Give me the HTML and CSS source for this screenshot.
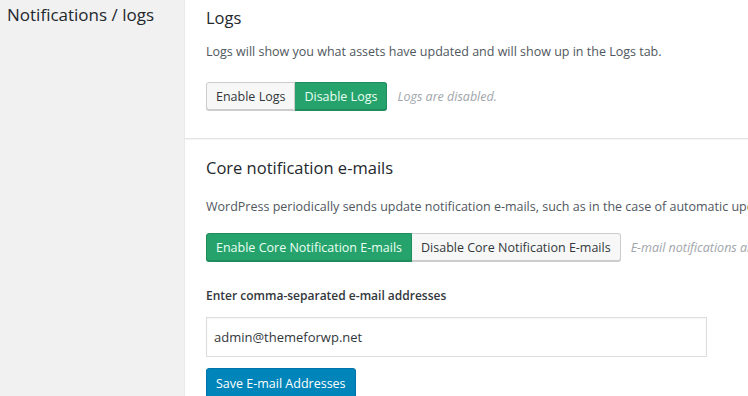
FILE: index.html
```html
<!DOCTYPE html>
<html lang="en">
<head>
    <meta charset="UTF-8">
    <title>Notifications / logs</title>
    <link rel="stylesheet" href="styles.css">
</head>
<body>
    <div class="sidebar">
        <h1 class="sidebar-title">Notifications / logs</h1>
    </div>

    <div class="main">
        <div class="section section-logs">
            <h2>Logs</h2>
            <p class="desc">Logs will show you what assets have updated and will show up in the Logs tab.</p>
            <div class="controls">
                <div class="btn-group">
                    <button class="btn">Enable Logs</button>
                    <button class="btn btn-on">Disable Logs</button>
                </div>
                <span class="status">Logs are disabled.</span>
            </div>
        </div>

        <div class="section section-core">
            <h2>Core notification e-mails</h2>
            <p class="desc">WordPress periodically sends update notification e-mails, such as in the case of automatic updates being applied.</p>
            <div class="controls">
                <div class="btn-group">
                    <button class="btn btn-on">Enable Core Notification E-mails</button>
                    <button class="btn">Disable Core Notification E-mails</button>
                </div>
                <span class="status">E-mail notifications are enabled.</span>
            </div>

            <label class="field-label" for="emails">Enter comma-separated e-mail addresses</label>
            <input class="field" id="emails" type="text" value="admin@themeforwp.net">
            <button class="btn-primary">Save E-mail Addresses</button>
        </div>
    </div>
</body>
</html>
```

FILE: styles.css
```css
body {
    margin: 0;
    display: flex;
    height: 396px;
    overflow: hidden;
    font-family: "Open Sans", "Noto Sans", sans-serif;
    font-size: 12.5px;
    color: #444;
    background-color: #fff;
}

.sidebar {
    width: 185px;
    flex-shrink: 0;
    background-color: #f1f1f1;
    border-right: 1px solid #e9e9e9;
    padding: 3px 7px;
    box-sizing: border-box;
}

.sidebar-title {
    margin: 0;
    font-size: 17px;
    font-weight: normal;
    line-height: 24px;
    color: #23282d;
    white-space: nowrap;
}

.main {
    flex: 1;
    min-width: 0;
    overflow: hidden;
}

.section {
    padding: 0 21px;
    white-space: nowrap;
}

.section-logs {
    padding-top: 6px;
    padding-bottom: 28px;
    border-bottom: 1px solid #e5e5e5;
    box-shadow: 0 1px 0 #f5f5f5;
}

.section-core {
    padding-top: 17px;
}

h2 {
    margin: 0;
    font-size: 16.5px;
    font-weight: normal;
    line-height: 24px;
    color: #23282d;
}

.desc {
    margin: 12px 0 0;
    line-height: 20px;
    color: #50575e;
}

.section-core .desc {
    margin-top: 17px;
}

/* Toggle buttons */
.controls {
    display: flex;
    align-items: center;
    margin-top: 20px;
}

.section-core .controls {
    margin-top: 16px;
}

.btn-group {
    display: flex;
}

.btn {
    height: 28px;
    padding: 0 9px;
    font-family: inherit;
    font-size: 12.5px;
    color: #32373c;
    background-color: #f7f7f7;
    border: 1px solid #cccccc;
    box-shadow: 0 1px 0 #cccccc;
    cursor: pointer;
}

.btn:first-child {
    border-radius: 3px 0 0 3px;
}

.btn:last-child {
    border-radius: 0 3px 3px 0;
    border-left: none;
}

.btn-on {
    color: #eafff3;
    background-color: #26a36c;
    border-color: #1e8c5b;
    box-shadow: 0 1px 0 #1e8c5b;
}

.status {
    margin-left: 10px;
    font-style: italic;
    color: #a0a5aa;
}

/* E-mail addresses */
.field-label {
    display: block;
    margin-top: 25px;
    line-height: 20px;
    font-size: 12px;
    font-weight: 600;
    color: #32373c;
}

.field {
    display: block;
    box-sizing: border-box;
    width: 501px;
    height: 40px;
    margin-top: 11px;
    padding: 0 7px;
    font-family: inherit;
    font-size: 13px;
    color: #32373c;
    border: 1px solid #dddddd;
    box-shadow: inset 0 1px 2px rgba(0, 0, 0, 0.04);
}

.btn-primary {
    display: block;
    height: 30px;
    margin-top: 11px;
    padding: 0 9px;
    font-family: inherit;
    font-size: 12.5px;
    color: #fff;
    background-color: #0085ba;
    border: 1px solid #0073aa;
    border-radius: 3px;
    box-shadow: 0 1px 0 #006799;
    cursor: pointer;
}
```
